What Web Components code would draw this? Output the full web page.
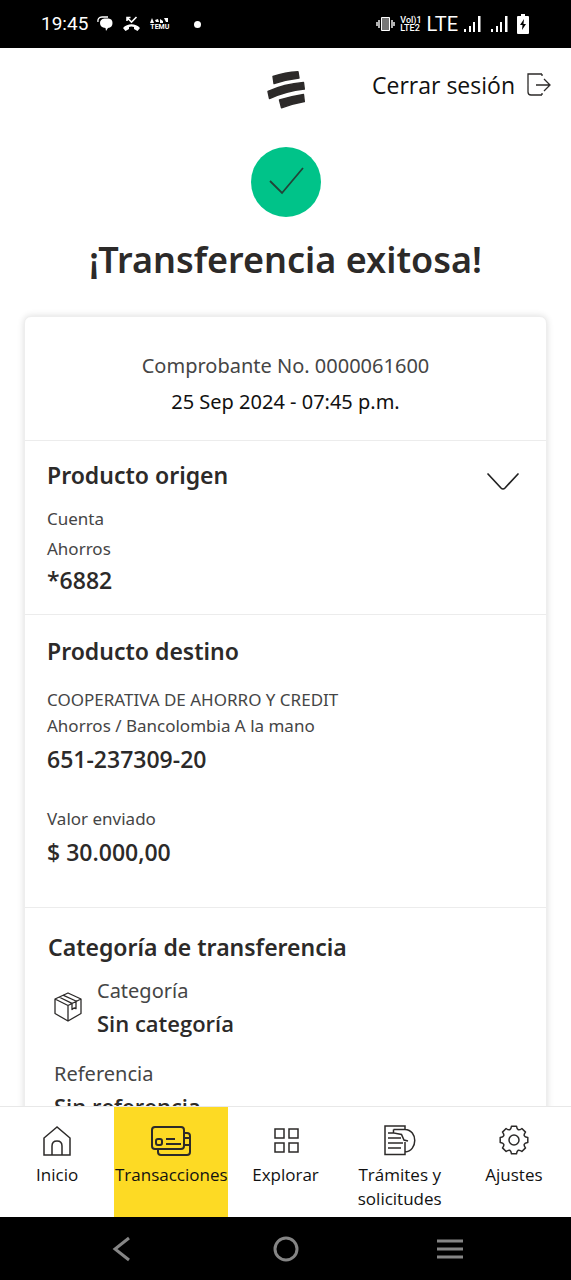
<!DOCTYPE html>
<html lang="es">
<head>
<meta charset="utf-8">
<meta name="viewport" content="width=device-width, initial-scale=1">
<title>Transferencia exitosa</title>
<style>
html, body { margin: 0; height: 100%; }
body { font-family: "Noto Sans", "Open Sans", sans-serif; color: #2c2a29; background: #fff; }
</style>
</head>
<body>
<transfer-app></transfer-app>
<script>
function define(name, html) {
  const template = document.createElement('template');
  template.innerHTML = html;
  customElements.define(name, class extends HTMLElement {
    constructor() {
      super();
      this.attachShadow({ mode: 'open' }).appendChild(template.content.cloneNode(true));
    }
  });
}

define('status-bar', `
<style>
:host { display: flex; align-items: center; justify-content: space-between; flex: none; height: 48px; box-sizing: border-box; padding: 0 42px 0 41px; background: #000; color: #fff; font-family: Roboto, sans-serif; }
div { display: flex; align-items: center; }
.left { gap: 9px; }
.right { gap: 5px; }
time { font-size: 19px; line-height: 24px; }
.temu { display: grid; gap: 1px; font-size: 7px; line-height: 6px; font-weight: 700; }
.dot { width: 7px; height: 7px; border-radius: 50%; background: #fff; margin-left: 16px; }
.volte { font-size: 9px; line-height: 8px; font-weight: 500; }
.lte { font-size: 20px; line-height: 24px; }
.battery { margin-left: 4px; }
.signal + .signal { margin-left: 4px; }
svg { display: block; fill: #fff; }
</style>
<div class="left">
  <time>19:45</time>
  <svg width="16" height="16" viewBox="0 0 16 16"><path d="M1 6C.5 3 2 1 5 1h6" fill="none" stroke="#fff" stroke-width="1.300"/><path d="M7.500 2.500h4q4 .3 4 4.500 0 4.500-4.500 5L9 15l-.5-3Q3 11.500 3 7q0-4 4.500-4.500z"/></svg>
  <svg width="19" height="16" viewBox="0 0 19 16"><path d="M1 12c4.500-5 12.500-5 17 0l-2.500 3-3.500-2v-2c-2-.7-3.500-.7-5 0v2l-3.500 2z"/><path d="M5 5V1.500h3.500M5.500 2l4 4 5-5" fill="none" stroke="#fff" stroke-width="1.600"/></svg>
  <span class="temu"><svg width="18" height="5" viewBox="0 0 18 5"><path d="M2 0l2 5H0zM5 2l3-1 1 3H6zM10 1l3 2v2h-3zM14 0h4v4h-2z"/></svg>TEMU</span>
  <span class="dot"></span>
</div>
<div class="right">
  <svg width="19" height="14" viewBox="0 0 19 14"><path d="M5.500.5h8v13h-8z" fill="#777" stroke="#fff"/><path d="M3 3v8M1 5v4M16 3v8M18 5v4" stroke="#fff" stroke-width="1.400"/></svg>
  <span class="volte">Vol)1<br>LTE2</span>
  <span class="lte">LTE</span>
  <svg class="signal" width="18" height="16" viewBox="0 0 18 16"><path d="M1 13h2v3H1zM6 10h2v6H6zM10 6h2v10h-2zM15 0h2.500v16H15z"/></svg>
  <svg class="signal" width="18" height="16" viewBox="0 0 18 16"><path d="M1 13h2v3H1zM6 10h2v6H6zM10 6h2v10h-2zM15 0h2.500v16H15z"/></svg>
  <svg class="battery" width="12" height="20" viewBox="0 0 12 20"><path d="M4 0h4v2h3a1 1 0 0 1 1 1v16a1 1 0 0 1-1 1H1a1 1 0 0 1-1-1V3a1 1 0 0 1 1-1h3z"/><path d="M7 5 3 11h2.500L5 16l4-6H6.500z" fill="#000"/></svg>
</div>`);

define('page-header', `
<style>
:host { display: grid; grid-template-columns: 1fr 38px 1fr; padding: 23px 20px 0; height: 38px; }
.logo { grid-column: 2; display: block; }
a { display: flex; justify-content: flex-end; align-items: center; gap: 12px; height: 28px; color: #111; font-family: "Open Sans", sans-serif; font-size: 23px; line-height: 28px; text-decoration: none; white-space: nowrap; }
</style>
<svg class="logo" width="38" height="38" viewBox="0 0 38 38" fill="#2c2a29" stroke="#2c2a29" stroke-width="1.400" stroke-linejoin="round"><path d="M6 5.500Q18 1.500 31 .8L32 7Q19 8.500 7 12.500zM1 20.500Q17 13 36.500 11.500L37.300 18Q19 20 2.500 27.500zM12.500 29Q24 25.500 36.500 23.500L37.300 30.500Q26 32.500 14.500 36.800z"/></svg>
<a href="#salir">Cerrar sesión
<svg width="24" height="24" viewBox="0 0 24 24" fill="none" stroke="#2c2a29" stroke-width="1.300"><path d="M15 1H1v18q0 3 3 3h11M15 1v2M15 20v2M9 12h13M17 6l6 6-6 6"/></svg></a>`);

define('success-banner', `
<style>
:host { display: flex; flex-direction: column; align-items: center; padding-top: 38px; }
svg { display: block; }
h1 { margin: 19px 0 32px; font-size: 36px; line-height: 48px; font-weight: 600; text-align: center; }
</style>
<svg width="70" height="70" viewBox="0 0 70 70"><circle cx="35" cy="35" r="35" fill="#00c389"/><path d="M19 34l12 12L52 21" fill="none" stroke="#224438" stroke-width="1.800"/></svg>
<h1><slot></slot></h1>`);

define('receipt-card', `
<style>
:host { display: block; margin: 0 24px; border: 1px solid #eee; border-radius: 7px; box-shadow: 0 0 7px rgba(0,0,0,.14); background: #fff; }
.top { padding: 31px 24px 20px; text-align: center; font-size: 20px; line-height: 36px; color: #454545; }
.top p { margin: 0; }
time { color: #111; }
</style>
<div class="top"><p><slot name="number"></slot></p><p><time><slot name="date"></slot></time></p></div>
<slot></slot>`);

define('receipt-section', `
<style>
:host { display: block; border-top: 1px solid #ececec; padding: 20px 22px; }
header { display: flex; justify-content: space-between; }
h2 { margin: 0; font-size: 23px; line-height: 32px; font-weight: 600; }
</style>
<header><h2><slot name="title"></slot></h2><slot name="action"></slot></header>
<slot></slot>`);

define('data-field', `
<style>
:host { display: block; }
.label { font-size: var(--label-size, 17px); line-height: var(--label-line, 26px); color: #454545; }
.value { font-family: "Open Sans", sans-serif; font-size: var(--value-size, 23px); line-height: 32px; font-weight: 600; color: #2c2a29; margin-top: var(--value-gap, 4px); }
</style>
<div class="label"><slot name="label"></slot></div>
<div class="value"><slot></slot></div>`);

define('chevron-button', `
<style>
:host { display: block; }
button { display: block; border: 0; background: none; padding: 14px 5px 0 0; }
svg { display: block; }
</style>
<button type="button" aria-label="Ver detalle"><svg width="32" height="18" viewBox="0 0 32 18" fill="none" stroke="#222" stroke-width="1.700" stroke-linecap="round"><path d="M1 1l13 14q2 2 4 0L31 1"/></svg></button>`);

define('nav-item', `
<style>
:host { display: block; flex: 1 1 0; min-width: 0; }
:host([active]) { background: #fdda24; }
a { display: flex; flex-direction: column; align-items: center; padding-top: 18px; color: #111; font-family: "Open Sans", sans-serif; font-size: 17px; line-height: 24px; text-align: center; text-decoration: none; }
.icon { height: 38px; }
</style>
<a href="#"><span class="icon"><slot name="icon"></slot></span><span><slot></slot></span></a>`);

define('system-bar', `
<style>
:host { display: flex; flex: none; height: 63px; justify-content: center; gap: 124px; align-items: center; background: #000; }
button { width: 40px; height: 40px; padding: 0; border: 0; background: none; display: grid; place-items: center; }
svg { fill: none; stroke: #858585; stroke-width: 3; display: block; }
</style>
<button type="button" aria-label="Atrás"><svg width="26" height="26" viewBox="0 0 26 26"><path d="M20 2 6 13l14 11"/></svg></button>
<button type="button" aria-label="Inicio del teléfono"><svg width="26" height="26" viewBox="0 0 26 26"><circle cx="13" cy="13" r="11"/></svg></button>
<button type="button" aria-label="Recientes"><svg width="26" height="26" viewBox="0 0 26 26"><path d="M0 5h26M0 13h26M0 21h26"/></svg></button>`);

define('transfer-app', `
<style>
:host { display: flex; flex-direction: column; height: 100vh; }
main { flex: 1; min-height: 0; overflow-y: auto; scrollbar-width: none; }
nav { display: flex; flex: none; min-height: 110px; border-top: 1px solid #e8e8e8; background: #fff; }
nav svg { display: block; fill: none; stroke: #2c2a29; stroke-width: 1.500; }
nav .cards { stroke-width: 2; }
.origin { padding-top: 18px; padding-bottom: 18px; }
.origin data-field { margin-top: 13px; --label-line: 30px; --value-gap: 0; }
.target { padding-bottom: 39px; }
.target data-field { margin-top: 20px; --value-gap: 4px; }
.target data-field + data-field { margin-top: 31px; }
.category { padding-top: 23px; --label-size: 20px; --label-line: 32px; --value-gap: 0; --value-size: 22px; }
.category [slot=title] { margin-left: 1px; }
.row { display: flex; align-items: center; gap: 15px; padding-left: 7px; margin-top: 12px; }
.row svg { display: block; fill: none; stroke: #2c2a29; stroke-width: 1.300; stroke-linejoin: round; }
.reference { margin: 19px 0 0 7px; }
</style>
<status-bar></status-bar>
<main>
  <page-header></page-header>
  <success-banner>¡Transferencia exitosa!</success-banner>
  <receipt-card>
    <span slot="number">Comprobante No. 0000061600</span>
    <span slot="date">25 Sep 2024 - 07:45 p.m.</span>
    <receipt-section class="origin">
      <span slot="title">Producto origen</span>
      <chevron-button slot="action"></chevron-button>
      <data-field><span slot="label">Cuenta<br>Ahorros</span>*6882</data-field>
    </receipt-section>
    <receipt-section class="target">
      <span slot="title">Producto destino</span>
      <data-field><span slot="label">COOPERATIVA DE AHORRO Y CREDIT<br>Ahorros / Bancolombia A la mano</span>651-237309-20</data-field>
      <data-field><span slot="label">Valor enviado</span>$ 30.000,00</data-field>
    </receipt-section>
    <receipt-section class="category">
      <span slot="title">Categoría de transferencia</span>
      <div class="row">
        <svg width="28" height="30" viewBox="0 0 28 30"><path d="M14 1 27 7v14.500L14 29 1 21.500V7zM1 7l13 6.500L27 7M14 13.500V29M5 5l13.500 6.700M9 3.200 23 9.500M18 12v5.500l2-1.500 2 .5V9.500"/></svg>
        <data-field><span slot="label">Categoría</span>Sin categoría</data-field>
      </div>
      <data-field class="reference"><span slot="label">Referencia</span>Sin referencia</data-field>
    </receipt-section>
  </receipt-card>
</main>
<nav aria-label="Principal">
  <nav-item><svg slot="icon" width="28" height="32" viewBox="0 0 28 32"><path d="M14 2 1 13v17h26V13zM9 30v-9q0-5 5-5t5 5v9"/></svg>Inicio</nav-item>
  <nav-item active><svg class="cards" slot="icon" width="40" height="32" viewBox="0 0 40 32"><rect x="1" y="2" width="32" height="22" rx="3"/><path d="M33 8h3q3 0 3 3v16q0 3-3 3H10q-3 0-3-3v-3M33 13h6M33 20h6M15 14h9M15 19h15"/><rect x="5" y="14" width="6" height="6" rx="2"/></svg>Transacciones</nav-item>
  <nav-item><svg slot="icon" width="26" height="32" viewBox="0 0 26 32"><path d="M2 4h9v9H2zM16 4h9v9h-9zM2 18h9v9H2zM16 18h9v9h-9z"/></svg>Explorar</nav-item>
  <nav-item><svg slot="icon" width="32" height="32" viewBox="0 0 32 32"><path d="M21 4.500V1H1v28.500h20V27M9.500 4.500H21C34 5 34 26 21 27V17M9.500 4.500v3.500l8 1.500 2.500 5.500 4 1M4 8h5M4 13h13M4 18h15M4 23h13"/></svg>Trámites y<br>solicitudes</nav-item>
  <nav-item><svg slot="icon" width="30" height="32" viewBox="0 0 30 32"><circle cx="15" cy="15" r="5"/><path d="M12.500 1.200h5Q18.300 7.100 22.900 3.500L26.500 7.100Q22.900 11.700 28.800 12.500v5Q22.900 18.300 26.500 22.900L22.900 26.500Q18.300 22.900 17.500 28.800h-5Q11.700 22.900 7.100 26.500L3.500 22.900Q7.100 18.300 1.200 17.500v-5Q7.100 11.700 3.500 7.100L7.100 3.500Q11.700 7.100 12.500 1.200z" stroke-linejoin="round"/></svg>Ajustes</nav-item>
</nav>
<system-bar></system-bar>`);
</script>
</body>
</html>
